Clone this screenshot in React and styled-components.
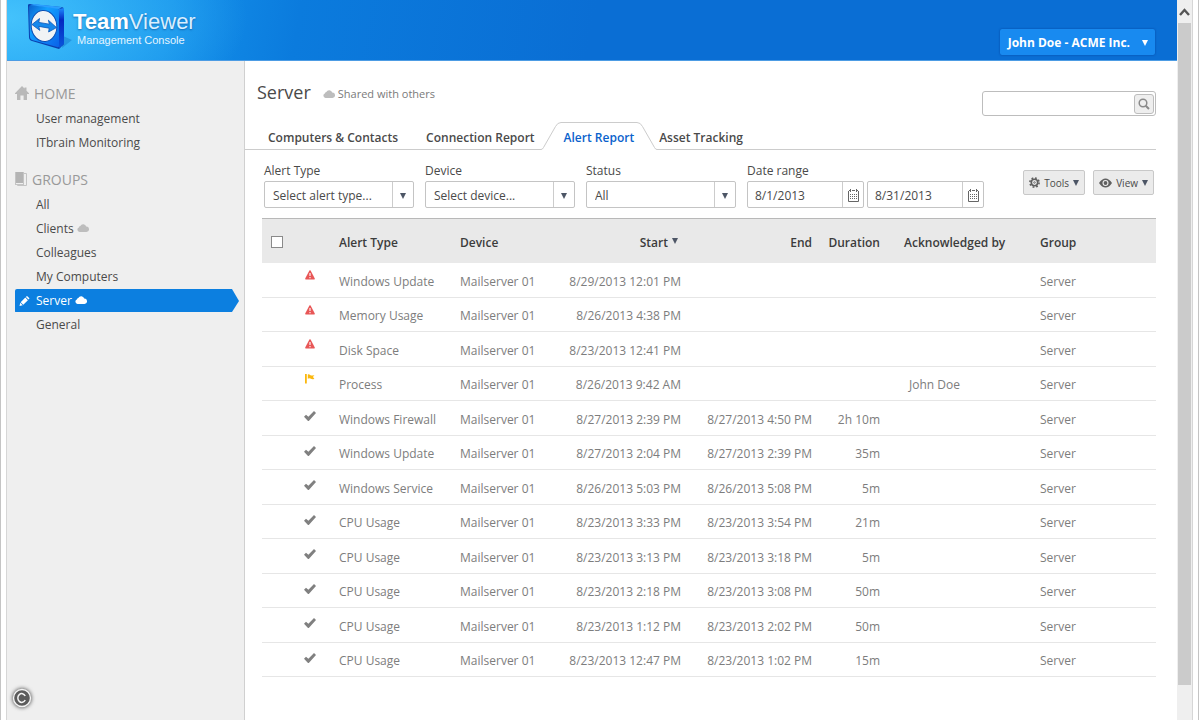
import { useState } from 'react';
import styled, { createGlobalStyle } from 'styled-components';

const homeLinks = ['User management', 'ITbrain Monitoring'];

const groups = [
  { name: 'All' },
  { name: 'Clients', shared: true },
  { name: 'Colleagues' },
  { name: 'My Computers' },
  { name: 'Server', shared: true, active: true },
  { name: 'General' },
];

const alerts = [
  { state: 'alert', type: 'Windows Update', start: '8/29/2013 12:01 PM' },
  { state: 'alert', type: 'Memory Usage', start: '8/26/2013 4:38 PM' },
  { state: 'alert', type: 'Disk Space', start: '8/23/2013 12:41 PM' },
  { state: 'flag', type: 'Process', start: '8/26/2013 9:42 AM', by: 'John Doe' },
  { state: 'done', type: 'Windows Firewall', start: '8/27/2013 2:39 PM', end: '8/27/2013 4:50 PM', duration: '2h 10m' },
  { state: 'done', type: 'Windows Update', start: '8/27/2013 2:04 PM', end: '8/27/2013 2:39 PM', duration: '35m' },
  { state: 'done', type: 'Windows Service', start: '8/26/2013 5:03 PM', end: '8/26/2013 5:08 PM', duration: '5m' },
  { state: 'done', type: 'CPU Usage', start: '8/23/2013 3:33 PM', end: '8/23/2013 3:54 PM', duration: '21m' },
  { state: 'done', type: 'CPU Usage', start: '8/23/2013 3:13 PM', end: '8/23/2013 3:18 PM', duration: '5m' },
  { state: 'done', type: 'CPU Usage', start: '8/23/2013 2:18 PM', end: '8/23/2013 3:08 PM', duration: '50m' },
  { state: 'done', type: 'CPU Usage', start: '8/23/2013 1:12 PM', end: '8/23/2013 2:02 PM', duration: '50m' },
  { state: 'done', type: 'CPU Usage', start: '8/23/2013 12:47 PM', end: '8/23/2013 1:02 PM', duration: '15m' },
];

const Logo = () => (
  <svg width='46' height='50' viewBox='0 0 46 50' aria-hidden='true'>
    <defs>
      <linearGradient id='face' x1='0' y1='0' x2='1' y2='1'>
        <stop offset='0' stopColor='#0a62cc' />
        <stop offset='0.35' stopColor='#12a0ff' />
        <stop offset='1' stopColor='#0a62e8' />
      </linearGradient>
      <linearGradient id='side' x1='0' y1='0' x2='0' y2='1'>
        <stop offset='0' stopColor='#1d8cff' />
        <stop offset='0.3' stopColor='#0428c0' />
        <stop offset='1' stopColor='#0a58dc' />
      </linearGradient>
    </defs>
    <path d='M36 36 L45 40 L35 48Z' fill='#0a5fb8' opacity='0.35' />
    <path d='M1 5 Q1 4 3 4 L34 7 Q37 7 37 10 L37 43 Q37 45 35 46 L32 49 L5 41 Q2 40 2 37Z' fill='#0a3fae' />
    <path d='M32 9 L37 8 L37 44 L32 48Z' fill='url(#side)' />
    <path d='M2 7 Q2 5 4 5 L30 8 Q32 8 32 10 L32 46 Q32 48 30 47 L5 40 Q3 39 3 37Z' fill='url(#face)' />
    <path d='M3 5 L7 4 L35 7 L32 9Z' fill='#2ba0ff' />
    <ellipse cx='17' cy='26' rx='12.8' ry='15.5' fill='#f1f3f5' stroke='#0b4fb4' strokeWidth='1' transform='rotate(-6 17 26)' />
    <path
      d='M5 24.5 L12.5 18.5 L11.8 22.4 L22.4 24.2 L21.4 20.2 L29.5 27.6 L21.6 32 L22.2 28.2 L11.8 26.4 L12.8 30.4Z'
      fill='#1488ec'
      stroke='#0a55b8'
      strokeWidth='0.8'
    />
  </svg>
);

const Cloud = ({ color }) => (
  <svg width='12' height='8' viewBox='0 0 12 8' fill={color} aria-hidden='true'>
    <path d='M2.5 8 A2.3 2.3 0 0 1 1.8 3.6 A2.2 2.2 0 0 1 3.3 2 A3.2 3.2 0 0 1 9.2 2.6 A2.7 2.7 0 0 1 9.5 8Z' />
  </svg>
);

const House = () => (
  <svg width='14' height='14' viewBox='0 0 14 14' fill='#b9b9b9' aria-hidden='true'>
    <path d='M7 0 L9.5 2.6 V1.5 H11.5 V4.7 L14 7.2 V8 H12 V14 H8.6 V9.5 H5.4 V14 H2 V8 H0 V7.2Z' />
  </svg>
);

const Book = () => (
  <svg width='12' height='14' viewBox='0 0 12 14' fill='none' aria-hidden='true'>
    <rect x='0.5' y='0.5' width='8' height='12' stroke='#c4c4c4' />
    <rect x='1' y='0' width='7' height='11' fill='#b4b4b4' />
    <path d='M9 1.5 H11.5 V13.5 H2.5 V13' stroke='#c4c4c4' />
  </svg>
);

const Pencil = () => (
  <svg width='11' height='10' viewBox='0 0 10 10' fill='#fff' aria-hidden='true'>
    <path d='M0 10 L0.8 6.8 L3.2 9.2Z M1.2 6.2 L5.8 1.6 L8.4 4.2 L3.8 8.8Z M6.4 1 L7.4 0 Q8.2 0 10 2.6 L9 3.6Z' />
  </svg>
);

const Search = () => (
  <svg width='12' height='12' viewBox='0 0 12 12' fill='none' stroke='#8a8a8a' aria-hidden='true'>
    <circle cx='5' cy='5' r='3.8' strokeWidth='1.5' />
    <path d='M7.7 7.7 L11 11' strokeWidth='2' />
  </svg>
);

const Calendar = () => (
  <svg width='11' height='13' viewBox='0 0 11 13' fill='none' stroke='#666' aria-hidden='true'>
    <path d='M0.5 2 V12.5 H10.5 V2' />
    <path d='M1 1.5 H3 M4 1.5 H7 M8 1.5 H10 M2.5 0 V3 M8.5 0 V3' />
    <path d='M2 5.5 H9.5 M2 7.5 H9.5 M2 9.5 H9.5' strokeDasharray='1 1' strokeWidth='1.2' />
  </svg>
);

const Gear = () => (
  <svg width='11' height='11' viewBox='0 0 11 11' fill='none' stroke='#606060' aria-hidden='true'>
    <circle cx='5.5' cy='5.5' r='3.2' strokeWidth='1.6' />
    <circle cx='5.5' cy='5.5' r='4.6' strokeWidth='1.6' strokeDasharray='1.8 1.81' />
    <circle cx='5.5' cy='5.5' r='0.8' strokeWidth='0.8' />
  </svg>
);

const Eye = () => (
  <svg width='13' height='10' viewBox='0 0 13 10' aria-hidden='true'>
    <path d='M0 5 Q3 0.5 6.5 0.5 T13 5 Q10 9.5 6.5 9.5 T0 5Z' fill='#606060' />
    <circle cx='6.5' cy='5' r='3' fill='#eee' />
    <circle cx='6.5' cy='5' r='1.9' fill='#606060' />
  </svg>
);

const Triangle = ({ color = '#4d5666' }) => (
  <svg width='6' height='6' viewBox='0 0 6 6' fill={color} aria-hidden='true'>
    <path d='M0 0 H6 L3 6Z' />
  </svg>
);

const StateIcon = ({ state }) => {
  if (state === 'alert') {
    return (
      <svg width='10' height='10' viewBox='0 0 10 10' role='img' aria-label='Alert'>
        <path d='M4.4 0.6 Q5 0 5.6 0.6 L9.8 8.4 Q10 9.2 9.2 9.4 H0.8 Q0 9.2 0.2 8.4Z' fill='#e85757' />
        <path d='M5 3 V6 M5 7 V8.2' stroke='#fff' strokeWidth='1.1' />
      </svg>
    );
  }
  if (state === 'flag') {
    return (
      <svg width='10' height='10' viewBox='0 0 10 10' role='img' aria-label='Acknowledged'>
        <path d='M0 0 H1.8 V9.4 H0Z M2.8 0.4 Q4 0 5.2 1 T9.4 1 L8 3 L9.4 5 Q7 5.4 5.4 4.6 T2.8 4.8Z' fill='#fbb80f' />
      </svg>
    );
  }
  return (
    <svg width='12' height='10' viewBox='0 0 12 10' role='img' aria-label='Resolved'>
      <path d='M0 5.8 L2 3.8 L4.4 5.8 L10 0 L12 2 L4.8 10 L4 10Z' fill='#808080' />
    </svg>
  );
};

const SlopedEdge = ({ flip }) => (
  <svg width='20' height='28' viewBox='0 0 20 28' aria-hidden='true'>
    <g transform={flip ? 'translate(20 0) scale(-1 1)' : undefined}>
      <path d='M0 28 V27.5 Q1.5 27.5 2.5 25.5 L14.5 4.5 Q16.5 0.5 20 0.5 V28Z' fill='#fff' />
      <path d='M0 27.5 Q1.5 27.5 2.5 25.5 L14.5 4.5 Q16.5 0.5 20 0.5' fill='none' stroke='#ccc' />
    </g>
  </svg>
);

const NavItem = ({ name, shared, active }) => (
  <NavLink href='#' $active={active} aria-current={active ? 'page' : undefined}>
    <NavMark>{active && <Pencil />}</NavMark>
    {name}
    {shared && (
      <SharedMark>
        <Cloud color={active ? '#fff' : '#bdbdbd'} />
      </SharedMark>
    )}
  </NavLink>
);

const SelectFilter = ({ label, option }) => (
  <Field>
    {label}
    <Control>
      <Select>
        <option>{option}</option>
      </Select>
      <Adornment>
        <Triangle />
      </Adornment>
    </Control>
  </Field>
);

const DateInput = ({ id, label, value, onChange }) => (
  <Control $narrow>
    <TextInput id={id} aria-label={label} value={value} onChange={(e) => onChange(e.target.value)} />
    <Adornment>
      <Calendar />
    </Adornment>
  </Control>
);

const App = () => {
  const [from, setFrom] = useState('8/1/2013');
  const [to, setTo] = useState('8/31/2013');

  return (
    <Frame>
      <GlobalStyle />
      <Page>
        <Header>
          <Brand>
            <Logo />
            <BrandText>
              <BrandName>
                <b>Team</b>Viewer
              </BrandName>
              <BrandSub>Management Console</BrandSub>
            </BrandText>
          </Brand>
          <AccountButton>
            John Doe - ACME Inc.
            <Triangle color='#fff' />
          </AccountButton>
        </Header>
        <Body>
          <Sidebar>
            <NavHeading>
              <House />
              HOME
            </NavHeading>
            <NavList>
              {homeLinks.map((name) => (
                <NavItem key={name} name={name} />
              ))}
            </NavList>
            <NavHeading>
              <Book />
              GROUPS
            </NavHeading>
            <NavList>
              {groups.map((group) => (
                <NavItem key={group.name} {...group} />
              ))}
            </NavList>
            <Copyright>
              <svg width='24' height='24' viewBox='0 0 24 24' role='img' aria-label='Copyright'>
                <circle cx='12' cy='12' r='8.5' fill='#5c5c5c' stroke='#f4f4f4' strokeWidth='1.4' />
                <path d='M15.2 10 A3.9 4.4 0 1 0 15.2 14' fill='none' stroke='#f4f4f4' strokeWidth='1.5' />
              </svg>
            </Copyright>
          </Sidebar>
          <Main>
            <TitleBar>
              <Title>Server</Title>
              <Shared>
                <Cloud color='#bdbdbd' />
                Shared with others
              </Shared>
              <SearchBox>
                <SearchInput aria-label='Search' />
                <SearchButton aria-label='Search'>
                  <Search />
                </SearchButton>
              </SearchBox>
            </TitleBar>
            <Tabs>
              <Tab href='#'>Computers &amp; Contacts</Tab>
              <Tab href='#'>Connection Report</Tab>
              <ActiveTab href='#' aria-current='page'>
                <SlopedEdge />
                <span>Alert Report</span>
                <SlopedEdge flip />
              </ActiveTab>
              <Tab href='#'>Asset Tracking</Tab>
            </Tabs>
            <Filters>
              <SelectFilter label='Alert Type' option='Select alert type...' />
              <SelectFilter label='Device' option='Select device...' />
              <SelectFilter label='Status' option='All' />
              <Field as='div'>
                <label htmlFor='from'>Date range</label>
                <DateRange>
                  <DateInput id='from' label='Date range from' value={from} onChange={setFrom} />
                  <DateInput id='to' label='Date range to' value={to} onChange={setTo} />
                </DateRange>
              </Field>
              <Actions>
                <ActionButton>
                  <Gear />
                  <span>Tools</span>
                  <Triangle />
                </ActionButton>
                <ActionButton>
                  <Eye />
                  <span>View</span>
                  <Triangle />
                </ActionButton>
              </Actions>
            </Filters>
            <Table>
              <colgroup>
                <Col $width={39} />
                <Col $width={38} />
                <Col $width={121} />
                <Col $width={90} />
                <Col $width={131} />
                <Col $width={131} />
                <Col $width={68} />
                <Col $width={160} />
                <col />
              </colgroup>
              <thead>
                <tr>
                  <th>
                    <Checkbox type='checkbox' aria-label='Select all' />
                  </th>
                  <th />
                  <th>Alert Type</th>
                  <th>Device</th>
                  <th className='right'>
                    <Sort>
                      Start <Triangle />
                    </Sort>
                  </th>
                  <th className='right'>End</th>
                  <th className='right'>Duration</th>
                  <th className='by'>Acknowledged by</th>
                  <th>Group</th>
                </tr>
              </thead>
              <tbody>
                {alerts.map((alert) => (
                  <tr key={alert.start}>
                    <td />
                    <StateCell $raised={alert.state !== 'done'}>
                      <StateIcon state={alert.state} />
                    </StateCell>
                    <td>{alert.type}</td>
                    <td>Mailserver 01</td>
                    <td className='right'>{alert.start}</td>
                    <td className='right'>{alert.end}</td>
                    <td className='right'>{alert.duration}</td>
                    <td className='by'>{alert.by}</td>
                    <td>Server</td>
                  </tr>
                ))}
              </tbody>
            </Table>
          </Main>
        </Body>
      </Page>
      <Scrollbar aria-hidden='true'>
        <svg width='15' height='23' viewBox='0 0 15 23'>
          <path d='M3 15 L7.5 10 L12 15' fill='none' stroke='#555' strokeWidth='2.4' />
        </svg>
        <Thumb />
      </Scrollbar>
    </Frame>
  );
};

const GlobalStyle = createGlobalStyle`
  * {
    box-sizing: border-box;
  }

  body {
    margin: 0;
    background: #fff;
    color: #4a4a4a;
    font-family: 'Open Sans', 'Noto Sans', sans-serif;
    font-size: 12px;
    line-height: 16px;
  }

  button,
  input,
  select {
    font: inherit;
    color: inherit;
  }

  a {
    color: inherit;
    text-decoration: none;
  }

  svg {
    flex: none;
  }
`;

const Frame = styled.div`
  display: flex;
  min-height: 100vh;
  padding: 0 5px;
  border: solid #c4c4c4;
  border-width: 0 1px;
`;

const Page = styled.div`
  flex: 1;
  min-width: 0;
  display: flex;
  flex-direction: column;
  border-left: 1px solid #d6d6d6;
`;

const Header = styled.header`
  display: flex;
  justify-content: space-between;
  height: 61px;
  padding: 0 22px 0 20px;
  background:
    radial-gradient(ellipse 240px 120px at 0 30%, rgba(80, 205, 255, 0.8), rgba(30, 160, 245, 0)),
    linear-gradient(100deg, #1498f0 0%, #1390ea 14%, #0b7bdd 25%, #0a6ed4 50%, #0a6ed4 100%);
  border-bottom: 1px solid #4d9ce4;
`;

const Brand = styled.div`
  display: flex;
`;

const BrandText = styled.div`
  padding-top: 10px;
  color: #fff;
`;

const BrandName = styled.div`
  font-family: 'Liberation Sans', Arial, sans-serif;
  font-size: 22px;
  line-height: 24px;
  color: #d9efff;
  text-shadow: 0 1px 2px rgba(0, 50, 120, 0.5);

  b {
    color: #fff;
  }
`;

const BrandSub = styled.div`
  padding-left: 4px;
  font-family: 'Liberation Sans', Arial, sans-serif;
  font-size: 11px;
  line-height: 12px;
  color: #e4f4ff;
`;

const AccountButton = styled.button`
  display: flex;
  align-items: center;
  gap: 12px;
  align-self: flex-start;
  height: 26px;
  margin-top: 29px;
  padding: 2px 7px 0 8px;
  border: 0;
  border-radius: 2px;
  background: #188af0;
  box-shadow: 0 0 2px rgba(0, 40, 120, 0.6);
  color: #fff;
  font-weight: 700;
`;

const Body = styled.div`
  flex: 1;
  display: flex;
`;

const Sidebar = styled.nav`
  flex: none;
  display: flex;
  flex-direction: column;
  width: 238px;
  padding: 23px 5px 10px 8px;
  background: #efefef;
  border-right: 1px solid #d0d0d0;
`;

const NavHeading = styled.h2`
  display: flex;
  align-items: center;
  gap: 5px;
  margin: 0;
  font-size: 14px;
  font-weight: 400;
  line-height: 20px;
  color: #999;

  svg {
    margin-bottom: 2px;
  }
`;

const NavList = styled.div`
  display: flex;
  flex-direction: column;
  padding: 3px 0 15px;
`;

const NavLink = styled.a`
  display: flex;
  align-items: center;
  height: 24px;
  padding-left: 4px;
  border-radius: 2px;
  color: ${({ $active }) => ($active ? '#fff' : '#4a4a4a')};
  background: ${({ $active }) => ($active ? '#0c7fe0' : 'none')};
  clip-path: ${({ $active }) =>
    $active ? 'polygon(0 0, calc(100% - 7px) 0, 100% 50%, calc(100% - 7px) 23px, 0 23px)' : 'none'};
`;

const NavMark = styled.span`
  display: flex;
  width: 17px;
`;

const SharedMark = styled.span`
  display: flex;
  padding: 0 0 3px 3px;
`;

const Copyright = styled.div`
  display: flex;
  margin-top: auto;
  margin-left: -5px;

  svg {
    filter: drop-shadow(0 0 2px #333);
  }
`;

const Main = styled.main`
  flex: 1;
  min-width: 0;
  padding-right: 21px;
`;

const TitleBar = styled.div`
  display: flex;
  align-items: center;
  height: 61px;
  padding-left: 12px;
`;

const Title = styled.h1`
  margin: 0 12px 0 0;
  font-size: 18px;
  font-weight: 400;
  line-height: 24px;
`;

const Shared = styled.span`
  display: flex;
  align-items: center;
  gap: 3px;
  padding-top: 5px;
  font-size: 11px;
  color: #7a7a7a;
`;

const SearchBox = styled.div`
  display: flex;
  align-items: center;
  width: 174px;
  height: 25px;
  margin: 24px 0 0 auto;
  padding-right: 1px;
  border: 1px solid #bdbdbd;
  border-radius: 3px;
`;

const SearchInput = styled.input`
  flex: 1;
  min-width: 0;
  border: 0;
  outline: 0;
  background: none;
`;

const SearchButton = styled.button`
  display: grid;
  place-items: center;
  width: 20px;
  height: 20px;
  padding: 0;
  border: 1px solid #bdbdbd;
  border-radius: 3px;
  background: #eee;
`;

const Tabs = styled.nav`
  display: flex;
  align-items: flex-end;
  height: 28px;
  padding-left: 23px;
  font-weight: 600;
  box-shadow: inset 0 -1px #ccc;
`;

const Tab = styled.a`
  height: 28px;
  margin-right: 28px;
  line-height: 32px;
`;

const ActiveTab = styled(Tab)`
  display: flex;
  margin: 0 2px 0 -22px;
  color: #0a62cc;

  span {
    padding: 0 3px;
    line-height: 30px;
    background: #fff;
    border-top: 1px solid #ccc;
  }
`;

const Filters = styled.div`
  display: flex;
  gap: 11px;
  padding: 13px 2px 10px 19px;
`;

const Field = styled.label`
  display: flex;
  flex-direction: column;
  gap: 2px;
`;

const Control = styled.div`
  display: grid;
  width: ${({ $narrow }) => ($narrow ? '117px' : '150px')};
  height: 27px;
  border: 1px solid #c4c4c4;
  border-radius: 2px;
  background: #fff;
`;

const Select = styled.select`
  grid-area: 1 / 1;
  width: 100%;
  padding: 2px 24px 0 8px;
  border: 0;
  background: none;
  appearance: none;
`;

const TextInput = styled.input`
  grid-area: 1 / 1;
  width: 100%;
  padding: 2px 24px 0 7px;
  border: 0;
  background: none;
`;

const Adornment = styled.span`
  grid-area: 1 / 1;
  justify-self: end;
  display: grid;
  place-items: center;
  width: 21px;
  padding-top: 2px;
  border-left: 1px solid #ccc;
  pointer-events: none;
`;

const DateRange = styled.div`
  display: flex;
  gap: 3px;
`;

const Actions = styled.div`
  display: flex;
  gap: 8px;
  margin: 7px 0 0 auto;
`;

const ActionButton = styled.button`
  display: flex;
  align-items: center;
  gap: 4px;
  height: 25px;
  padding: 0 5px;
  border: 1px solid #c8c8c8;
  border-radius: 2px;
  background: #ebebeb;
  font-size: 10px;
`;

const Table = styled.table`
  width: calc(100% - 17px);
  margin-left: 17px;
  table-layout: fixed;
  border-collapse: separate;
  border-spacing: 0;
  border-top: 1px solid #b8b8b8;

  th,
  td {
    padding: 0;
    text-align: left;
    white-space: nowrap;
  }

  th {
    height: 44px;
    padding-top: 3px;
    background: #e9e9e9;
    color: #3c3c3c;
    font-weight: 600;
  }

  td {
    height: 35px;
    padding-top: 3px;
    border-bottom: 1px solid #e6e6e6;
    color: #7d7d7d;
  }

  tr:nth-child(even) td {
    height: 34px;
  }

  .right {
    text-align: right;
  }

  th.by {
    padding-left: 24px;
  }

  td.by {
    padding-left: 29px;
  }
`;

const Sort = styled.span`
  display: flex;
  align-items: center;
  justify-content: flex-end;
  gap: 4px;
  padding-right: 3px;

  svg {
    margin-bottom: 3px;
  }
`;

const Col = styled.col`
  width: ${({ $width }) => $width}px;
`;

const StateCell = styled.td`
  && {
    padding: ${({ $raised }) => ($raised ? '0 0 8px 4px' : '0 0 2px 3px')};
  }
`;

const Checkbox = styled.input`
  appearance: none;
  display: block;
  width: 12px;
  height: 12px;
  margin: 0 0 2px 9px;
  border: 1px solid #8a8a8a;
  background: #fff;

  &:checked {
    background: #0c7fe0;
  }
`;

const Scrollbar = styled.div`
  display: flex;
  flex-direction: column;
  width: 16px;
  height: 100vh;
  background: #efefef;
  border-right: 1px solid #d6d6d6;
`;

const Thumb = styled.div`
  height: 92%;
  margin: 0 1px;
  background: #cbcbcb;
`;

export default App;
